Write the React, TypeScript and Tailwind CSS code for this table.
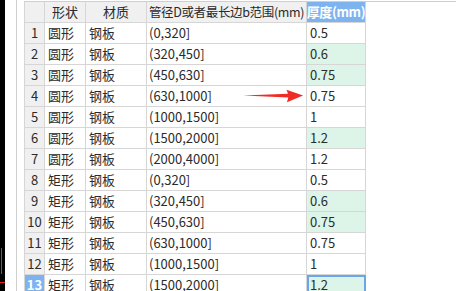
const rows: [string, string, string, string, boolean][] = [
  ["圆形", "钢板", "(0,320]", "0.5", false],
  ["圆形", "钢板", "(320,450]", "0.6", true],
  ["圆形", "钢板", "(450,630]", "0.75", true],
  ["圆形", "钢板", "(630,1000]", "0.75", false],
  ["圆形", "钢板", "(1000,1500]", "1", false],
  ["圆形", "钢板", "(1500,2000]", "1.2", true],
  ["圆形", "钢板", "(2000,4000]", "1.2", false],
  ["矩形", "钢板", "(0,320]", "0.5", false],
  ["矩形", "钢板", "(320,450]", "0.6", true],
  ["矩形", "钢板", "(450,630]", "0.75", true],
  ["矩形", "钢板", "(630,1000]", "0.75", false],
  ["矩形", "钢板", "(1000,1500]", "1", false],
  ["矩形", "钢板", "(1500,2000]", "1.2", true],
];

const cell = "h-[21px] shrink-0 whitespace-nowrap overflow-hidden border-r border-b border-[#d6d6d6] flex items-center";

function Arrow() {
  return (
    <svg className="absolute left-[240px] top-[86px]" width="66" height="20" viewBox="240 86 66 20">
      <polygon points="243,95.6 288,93.8 286.5,89.8 303,95.5 287,102.2 288.2,97.6" fill="#ee2b24" />
    </svg>
  );
}

export default function App() {
  return (
    <div className="relative flex h-[291px] w-[456px] overflow-hidden bg-white text-[13px] text-[#2b2b2b] [font-family:'Microsoft_YaHei','Noto_Sans_CJK_SC',sans-serif]">
      <div className="relative w-[5px] shrink-0 bg-black">
        <div className="absolute left-[1px] top-[248px] h-[26px] w-px bg-[#5a5f80]" />
        <div className="absolute left-0 top-[282px] h-px w-[5px] bg-[#e02020]" />
      </div>
      <div className="w-[12px] shrink-0 border-r border-[#cfcfcf]" />
      <div className="w-[7px] shrink-0" />
      <div className="mt-px flex-1 border-t border-[#cfcfcf]">
        <div className="flex">
          <div className={`${cell} w-[21px] border-l bg-[#f0f0f0]`} />
          <div className={`${cell} w-[41px] justify-center bg-[#f0f0f0]`}>形状</div>
          <div className={`${cell} w-[61px] justify-center bg-[#f0f0f0]`}>材质</div>
          <div className={`${cell} w-[160px] justify-center bg-[#f0f0f0] text-[12.5px] tracking-[-0.35px]`}>管径D或者最长边b范围(mm)</div>
          <div className={`${cell} w-[59px] justify-center bg-[#7db4ef] font-bold tracking-[-0.4px] text-white`}>厚度(mm)</div>
        </div>
        {rows.map((r, i) => {
          const sel = i === 12;
          return (
            <div key={i} className="flex">
              <div className={`${cell} w-[21px] justify-center border-l ${sel ? "bg-[#7db4ef] font-bold text-white" : "bg-[#f0f0f0]"}`}>{i + 1}</div>
              <div className={`${cell} w-[41px] pl-[3px]`}>{r[0]}</div>
              <div className={`${cell} w-[61px] pl-[3px]`}>{r[1]}</div>
              <div className={`${cell} w-[160px] pl-[2px]`}>{r[2]}</div>
              <div className={`${cell} w-[59px] pl-[3px] ${r[4] ? "bg-[#dcf5e8]" : ""} ${sel ? "outline-2 -outline-offset-2 outline-[#6aa6ea]" : ""}`}>{r[3]}</div>
            </div>
          );
        })}
      </div>
      <Arrow />
    </div>
  );
}
